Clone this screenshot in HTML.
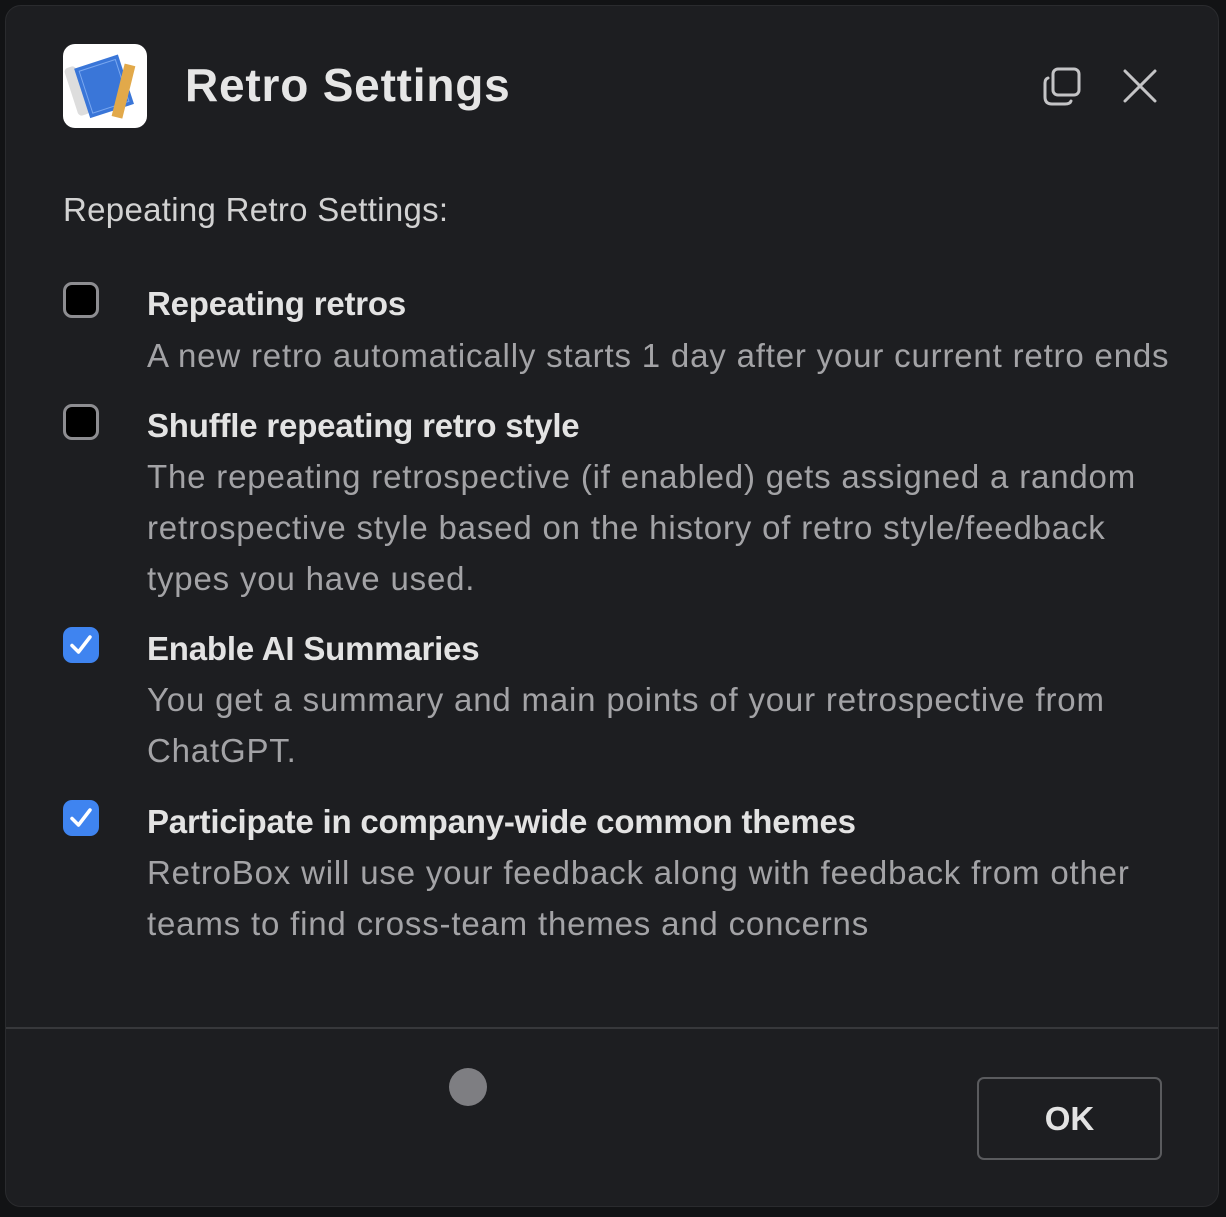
<!DOCTYPE html>
<html><head><meta charset="utf-8"><style>
html,body{margin:0;padding:0;width:1226px;height:1217px;background:#121315;overflow:hidden;font-family:"Liberation Sans",sans-serif;}
.dlg{position:absolute;left:5px;top:5px;width:1214px;height:1202px;background:#1d1e21;border-radius:16px;border:1px solid #2a2b2e;box-sizing:border-box;}
.abs{position:absolute;white-space:nowrap;}
.title{left:185px;top:58px;font-size:46px;font-weight:bold;color:#e6e6e6;letter-spacing:0.8px;}
.sub{left:63px;top:191px;font-size:33px;color:#d2d2d2;letter-spacing:0.3px;}
.cb{position:absolute;left:63px;width:36px;height:36px;box-sizing:border-box;border-radius:9px;}
.off{background:#000;border:3px solid #8d8d91;}
.on{background:#3f84f0;}
.h{left:147px;font-size:33px;font-weight:bold;color:#e3e3e3;letter-spacing:-0.2px;}
.d{left:147px;font-size:33px;color:#a3a3a6;line-height:51px;letter-spacing:0.82px;}
</style></head><body>
<div class="dlg"></div>
<svg class="abs" style="left:63px;top:44px" width="84" height="84" viewBox="0 0 84 84">
<rect width="84" height="84" rx="12" fill="#fff"/>
<rect x="8" y="22" width="12" height="50" rx="4" fill="#ddd" transform="rotate(-18 14 47)"/>
<g transform="rotate(-18 42 42)"><rect x="18" y="16" width="46" height="52" fill="#3a76d8"/><rect x="22" y="20" width="38" height="44" fill="none" stroke="#7aa8f0" stroke-width="1"/></g>
<rect x="55" y="20" width="11" height="54" fill="#e2a94a" transform="rotate(14 60 47)"/>
</svg>
<div class="abs title">Retro Settings</div>
<svg class="abs" style="left:1043px;top:67px" width="40" height="40" viewBox="0 0 40 40" fill="none" stroke="#c4c4c6" stroke-width="3" stroke-linecap="round">
<rect x="10" y="2" width="26" height="26" rx="5"/>
<path d="M5 11 Q2 12 2 16 V30 Q2 37 9 37 H22 Q27 37 28 34"/>
</svg>
<svg class="abs" style="left:1122px;top:68px" width="36" height="36" viewBox="0 0 36 36" stroke="#c4c4c6" stroke-width="3" stroke-linecap="round"><path d="M3 3L33 33M33 3L3 33"/></svg>
<div class="abs sub">Repeating Retro Settings:</div>

<div class="cb off" style="top:282px"></div>
<div class="abs h" style="top:285px">Repeating retros</div>
<div class="abs d" style="top:330px">A new retro automatically starts 1 day after your current retro ends</div>

<div class="cb off" style="top:404px"></div>
<div class="abs h" style="top:407px">Shuffle repeating retro style</div>
<div class="abs d" style="top:451px">The repeating retrospective (if enabled) gets assigned a random<br>retrospective style based on the history of retro style/feedback<br>types you have used.</div>

<div class="cb on" style="top:627px"><svg width="36" height="36" viewBox="0 0 36 36"><path d="M9 18.5L15.5 25L27 10" fill="none" stroke="#fff" stroke-width="3.5" stroke-linecap="round" stroke-linejoin="round"/></svg></div>
<div class="abs h" style="top:630px">Enable AI Summaries</div>
<div class="abs d" style="top:674px">You get a summary and main points of your retrospective from<br>ChatGPT.</div>

<div class="cb on" style="top:800px"><svg width="36" height="36" viewBox="0 0 36 36"><path d="M9 18.5L15.5 25L27 10" fill="none" stroke="#fff" stroke-width="3.5" stroke-linecap="round" stroke-linejoin="round"/></svg></div>
<div class="abs h" style="top:803px">Participate in company-wide common themes</div>
<div class="abs d" style="top:847px">RetroBox will use your feedback along with feedback from other<br>teams to find cross-team themes and concerns</div>

<div class="abs" style="left:6px;top:1027px;width:1212px;height:2px;background:#37383b"></div>
<div class="abs" style="left:449px;top:1068px;width:38px;height:38px;border-radius:50%;background:#7e7e82"></div>
<div class="abs" style="left:977px;top:1077px;width:185px;height:83px;box-sizing:border-box;border:2px solid #5a5b5e;border-radius:7px;color:#e3e3e3;font-size:33px;font-weight:bold;text-align:center;line-height:79px;">OK</div>
</body></html>
